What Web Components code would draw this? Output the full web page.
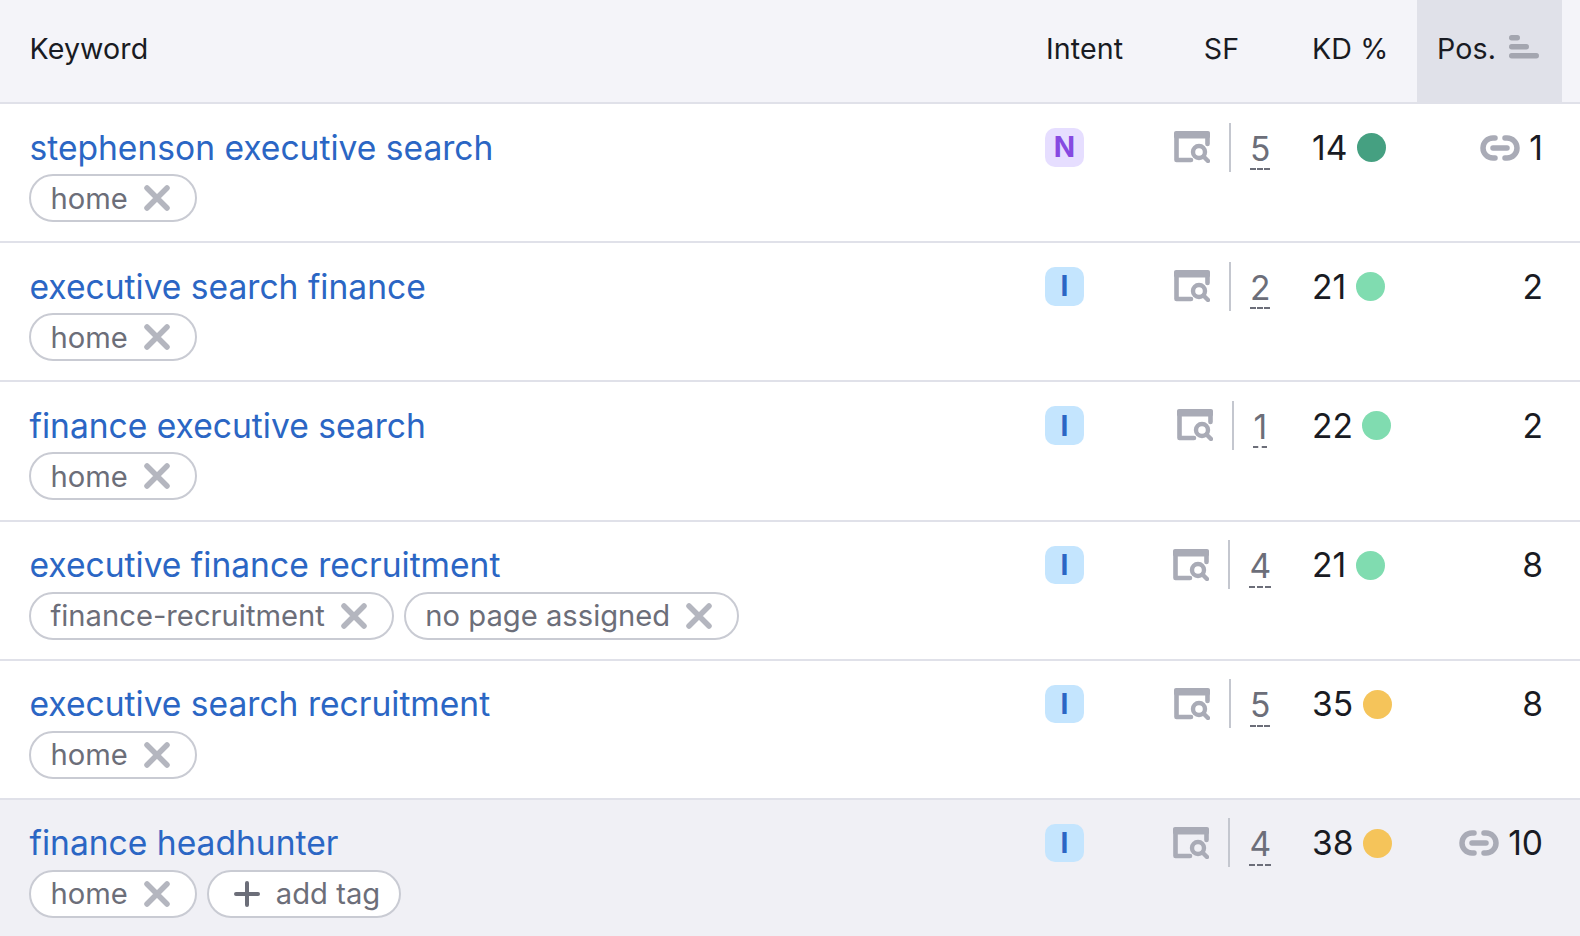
<!DOCTYPE html>
<html><head><meta charset="utf-8">
<style>
html,body{margin:0;padding:0;background:#fff;height:936px;overflow:hidden;font-family:Inter,"Liberation Sans",sans-serif;color:#191b23}
</style></head><body>
<kw-table>
<kw-head slot="head"></kw-head>
<kw-row kw="stephenson executive search" intent="N" sf="5" kd="14" kdc="#45a081" pos="1" link><kw-tag>home</kw-tag></kw-row>
<kw-row kw="executive search finance" intent="I" sf="2" kd="21" kdc="#80dcb0" pos="2"><kw-tag>home</kw-tag></kw-row>
<kw-row kw="finance executive search" intent="I" sf="1" kd="22" kdc="#80dcb0" pos="2"><kw-tag>home</kw-tag></kw-row>
<kw-row kw="executive finance recruitment" intent="I" sf="4" kd="21" kdc="#80dcb0" pos="8"><kw-tag>finance-recruitment</kw-tag><kw-tag>no page assigned</kw-tag></kw-row>
<kw-row kw="executive search recruitment" intent="I" sf="5" kd="35" kdc="#f5c45a" pos="8"><kw-tag>home</kw-tag></kw-row>
<kw-row kw="finance headhunter" intent="I" sf="4" kd="38" kdc="#f5c45a" pos="10" link active><kw-tag>home</kw-tag><kw-tag add>add tag</kw-tag></kw-row>
</kw-table>
<script>
const COLS='grid-template-columns:1022px 130.5px 137px 127.5px 145px 18px';
function def(name,css,html){
  customElements.define(name,class extends HTMLElement{
    constructor(){super();this.attachShadow({mode:'open'})}
    connectedCallback(){this.shadowRoot.innerHTML='<style>'+css+'</style>'+html(this)}
  });
}
def('kw-table',':host{display:block;width:1580px}',()=>'<slot name="head"></slot><slot></slot>');
def('kw-head',`:host{display:grid;${COLS};height:104px;box-sizing:border-box;background:#f4f4f9;border-bottom:2px solid #e0e1e9;font-size:28.6px;line-height:38px;color:#191b23;letter-spacing:.1px}
div{display:flex;align-items:center;padding-bottom:5px}
.k{padding-left:29.5px}.i{padding-left:24px}.s{justify-content:center;padding-left:1px}.d{padding-left:22.5px}
.p{background:#e0e1e9;padding-left:20px;gap:13px}
svg{display:block;margin-top:-3px}`,()=>`<div class="k">Keyword</div><div class="i">Intent</div><div class="s">SF</div><div class="d">KD %</div>
<div class="p">Pos.<svg width="30" height="26" viewBox="0 0 30 26" fill="#a4a6b0"><rect x="0" y="1" width="11" height="5.5" rx="2.7"/><rect x="0" y="10" width="20" height="5.5" rx="2.7"/><rect x="0" y="19" width="30" height="5.5" rx="2.7"/></svg></div><div></div>`);
def('kw-row',`:host{display:grid;${COLS};height:139.2px;box-sizing:border-box;border-bottom:2px solid #e0e1e9;background:#fff}
:host([active]){background:#f0f0f5;border-bottom:0;height:136px}
.kw{padding:24.5px 0 0 29.5px}
a{display:block;color:#2b66c4;font-size:33.6px;line-height:38px;text-decoration:none;white-space:nowrap}
.tags{display:flex;gap:10px;margin:7.5px 0 0 -.5px}
.in{padding:24px 0 0 23px}
.badge{display:flex;width:39px;height:38.5px;border-radius:10px;align-items:center;justify-content:center;font-size:28px;font-weight:700;line-height:38px}
.N{background:#e6deff;color:#8649e1}.I{background:#c4e5fe;color:#2b66c4}
.sf{display:flex;justify-content:center;align-items:flex-start;padding:18.5px 0 0 2px}
.sfi{display:flex;align-items:center;height:49px}
.sep{width:2px;height:49px;background:#c4c7cf;margin:0 19.5px 0 19px}
.n{font-size:33.6px;line-height:38px;color:#6c6e79;display:block;border-bottom:2px dashed #6c6e79;height:40.5px;box-sizing:border-box;margin-top:7px;padding:0}
.kd{display:flex;gap:9.5px;align-items:center;padding:24.5px 0 0 22.5px;height:38px;font-size:33.6px;line-height:38px}
.dot{width:29px;height:29px;border-radius:50%;display:block}
.pos{display:flex;justify-content:flex-end;align-items:center;gap:9px;padding:24.5px 19px 0 0;height:38px;font-size:33.6px;line-height:38px}
svg{display:block}`,el=>{
 const g=n=>el.getAttribute(n);
 return `<div class="kw"><a href="#" onclick="return false">${g('kw')}</a><div class="tags"><slot></slot></div></div>
<div class="in"><span class="badge ${g('intent')}">${g('intent')}</span></div>
<div class="sf"><div class="sfi"><svg width="36" height="32" viewBox="0 0 36 32" fill="none"><path d="M2.5 3V29H17M33.5 3V13" stroke="#a9abb6" stroke-width="4.6" stroke-linejoin="round" stroke-linecap="round"/><rect x="0" y="0" width="36" height="7.5" rx="2" fill="#a9abb6"/><circle cx="25" cy="21" r="6" stroke="#a9abb6" stroke-width="4.4"/><path d="M29.5 25.5l4.5 4.5" stroke="#a9abb6" stroke-width="4.4" stroke-linecap="round"/></svg></div><span class="sep"></span><span class="n">${g('sf')}</span></div>
<div class="kd"><span>${g('kd')}</span><span class="dot" style="background:${g('kdc')}"></span></div>
<div class="pos">${el.hasAttribute('link')?`<svg width="40" height="28" viewBox="0 0 40 28" fill="none" stroke="#a9abb6" stroke-width="5.5" stroke-linecap="round"><path d="M15 4H13a10 10 0 0 0 0 20h2M25 4h2a10 10 0 0 1 0 20h-2M13 14h14"/></svg>`:''}<span>${g('pos')}</span></div><div></div>`;
});
def('kw-tag',`:host{display:inline-flex;align-items:center;height:48px;box-sizing:border-box;border:2px solid #c9cbd3;border-radius:24px;background:#fff;padding:0 25px 0 19.5px;gap:16px;font-size:29.2px;color:#6c6e79;white-space:nowrap}
:host([add]){padding:0 19px 0 25px;gap:16px}
svg{display:block;flex:none}`,el=>el.hasAttribute('add')
 ?`<svg width="26" height="26" viewBox="0 0 26 26" stroke="#6c6e79" stroke-width="4" stroke-linecap="round"><path d="M13 2v22M2 13h22"/></svg><span><slot></slot></span>`
 :`<span><slot></slot></span><svg width="26" height="26" viewBox="0 0 26 26" stroke="#b4b6bf" stroke-width="5.5" stroke-linecap="round"><path d="M3 3l20 20M23 3L3 23"/></svg>`);
</script>
</body></html>
